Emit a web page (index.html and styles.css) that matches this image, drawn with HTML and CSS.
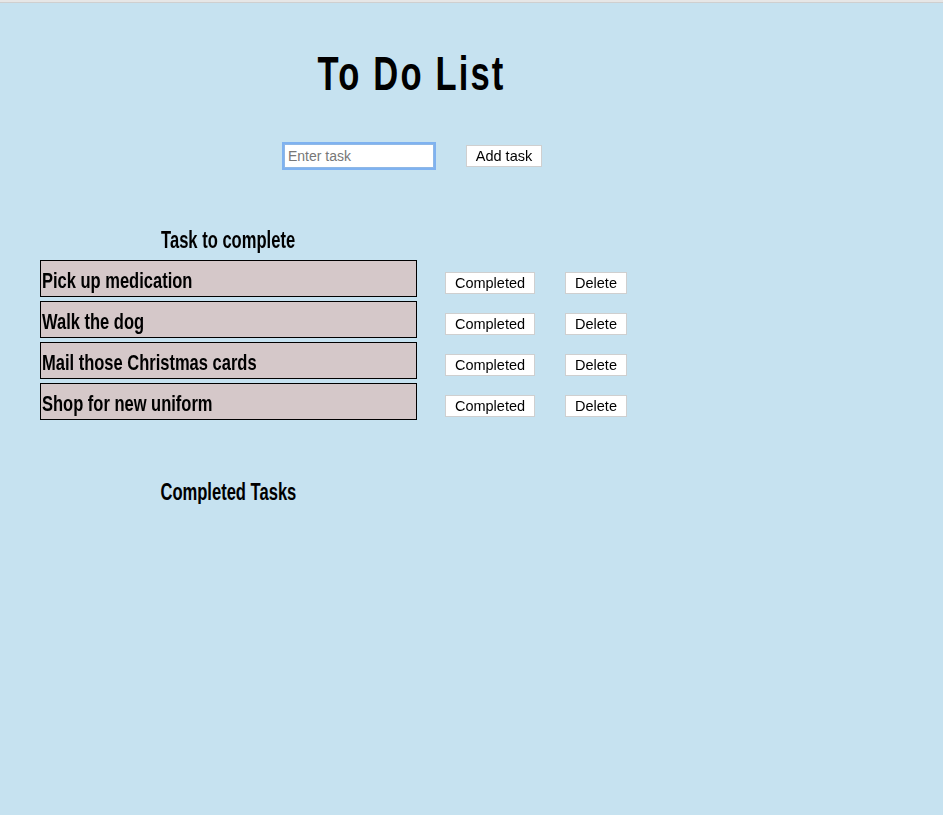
FILE: index.html
```html
<!DOCTYPE html>
<html>
<head>
<meta charset="utf-8">
<link rel="stylesheet" href="styles.css">
</head>
<body>
<div class="topbar"></div>
<main class="page">
  <h1 class="title"><span class="narrow">To Do List</span></h1>
  <div class="entry">
    <input class="task-input" type="text" placeholder="Enter task" autofocus>
    <button class="btn btn-add">Add task</button>
  </div>
  <section class="todo">
    <h2 class="heading"><span class="narrow">Task to complete</span></h2>
    <ul class="list">
      <li class="row"><span class="task"><span class="narrow-left">Pick up medication</span></span><button class="btn btn-done">Completed</button><button class="btn btn-del">Delete</button></li>
      <li class="row"><span class="task"><span class="narrow-left">Walk the dog</span></span><button class="btn btn-done">Completed</button><button class="btn btn-del">Delete</button></li>
      <li class="row"><span class="task"><span class="narrow-left">Mail those Christmas cards</span></span><button class="btn btn-done">Completed</button><button class="btn btn-del">Delete</button></li>
      <li class="row"><span class="task"><span class="narrow-left">Shop for new uniform</span></span><button class="btn btn-done">Completed</button><button class="btn btn-del">Delete</button></li>
    </ul>
  </section>
  <section class="done">
    <h2 class="heading"><span class="narrow">Completed Tasks</span></h2>
  </section>
</main>
</body>
</html>
```

FILE: styles.css
```css
html, body {
  margin: 0;
  padding: 0;
  background: #c6e2f0;
  min-height: 100%;
}
body {
  font-family: "Liberation Sans", Arial, sans-serif;
  color: #000;
}
.topbar {
  height: 2px;
  background: #e6e6e6;
  border-bottom: 1px solid #cfcfcf;
}
.page {
  padding: 0 0 0 40px;
}
.narrow {
  display: inline-block;
  white-space: nowrap;
  transform: scaleX(0.72);
  transform-origin: center;
}
.narrow-left {
  display: inline-block;
  white-space: nowrap;
  transform: scaleX(0.75);
  transform-origin: left center;
}
.title {
  margin: 41px 0 0 0;
  width: 743px;
  text-align: center;
  font-size: 48px;
  font-weight: bold;
  letter-spacing: 3px;
  line-height: 60px;
}
.entry {
  display: flex;
  align-items: center;
  margin: 40px 0 0 244px;
  gap: 32px;
}
.task-input {
  box-sizing: border-box;
  width: 150px;
  height: 24px;
  padding: 0 3px;
  border: 1px solid #8fb8e6;
  outline: 2px solid #7fb2f0;
  outline-offset: 0;
  font-family: "Liberation Sans", sans-serif;
  font-size: 14px;
  background: #fff;
}
.task-input::placeholder {
  color: #777;
}
.btn {
  box-sizing: border-box;
  height: 22px;
  padding: 0;
  background: #fff;
  border: 1px solid #cfcfcf;
  font-family: "Liberation Sans", sans-serif;
  font-size: 14.5px;
  color: #000;
}
.btn-add {
  width: 76px;
}
.todo {
  margin-top: 61px;
}
.heading {
  margin: 0;
  width: 377px;
  text-align: center;
  font-size: 23px;
  font-weight: bold;
  line-height: 23px;
}
.list {
  list-style: none;
  margin: 8px 0 0 0;
  padding: 0;
  display: flex;
  flex-direction: column;
  gap: 4px;
}
.row {
  display: flex;
  align-items: center;
}
.task {
  box-sizing: border-box;
  width: 377px;
  height: 37px;
  padding: 2px 1px 0;
  background: #d5c8c9;
  border: 1px solid #000;
  font-size: 22px;
  font-weight: bold;
  line-height: 35px;
}
.btn-done {
  margin: 8px 0 0 28px;
  width: 90px;
}
.btn-del {
  margin: 8px 0 0 30px;
  width: 62px;
}
.done {
  margin-top: 61px;
}
```
